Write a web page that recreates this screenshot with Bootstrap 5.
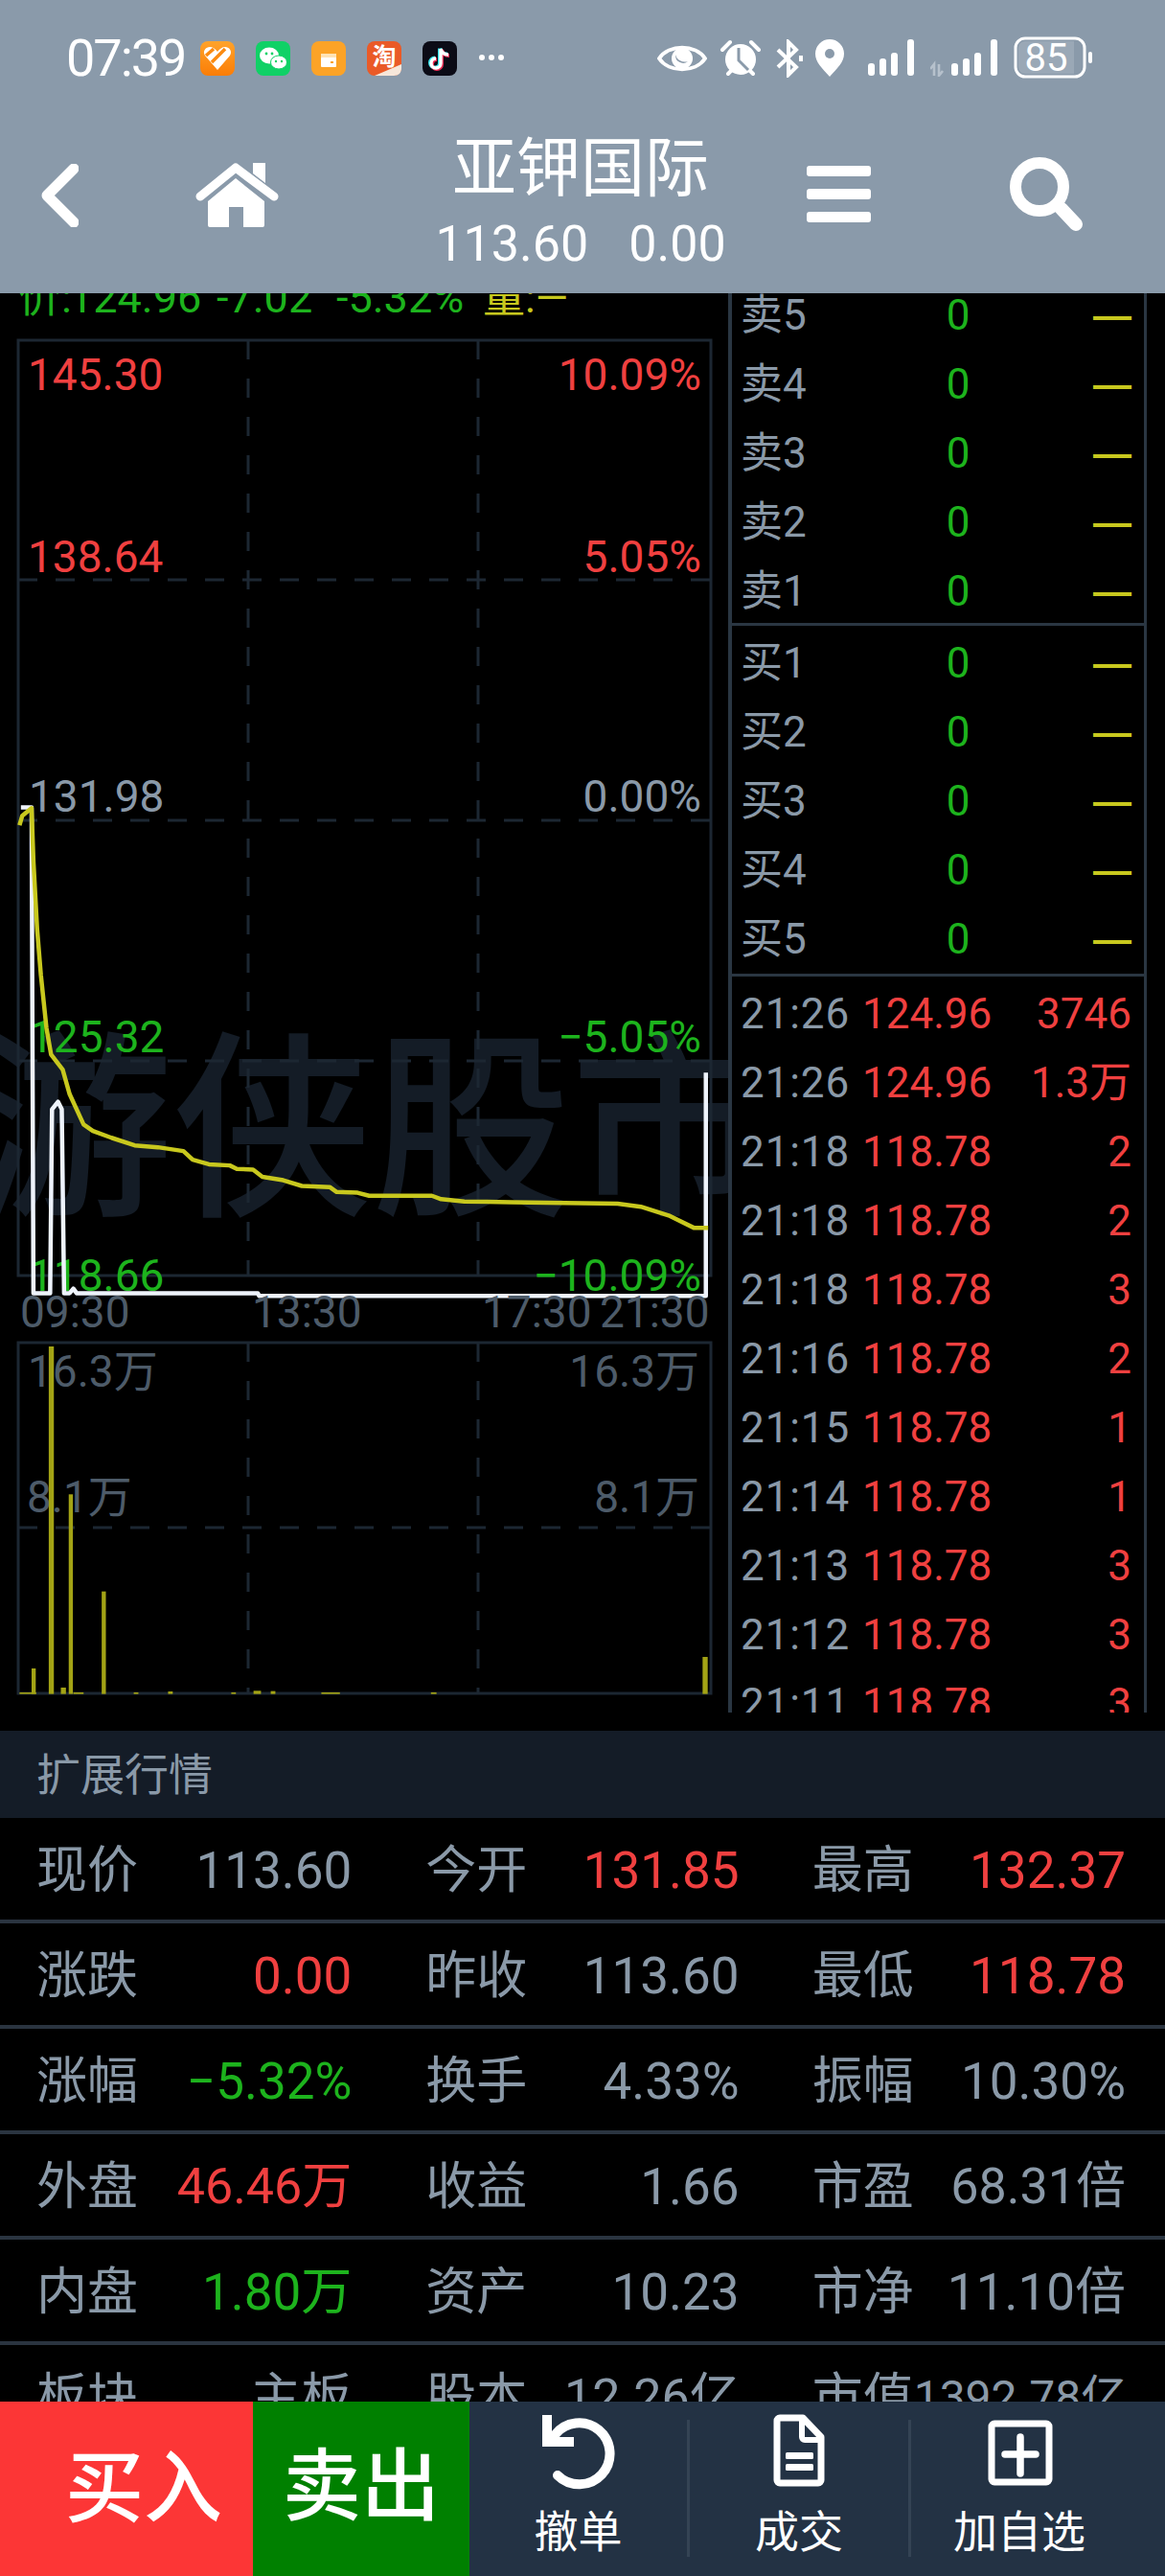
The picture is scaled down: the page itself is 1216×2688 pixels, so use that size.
<!DOCTYPE html>
<html lang="zh-CN">
<head>
<meta charset="utf-8">
<title>亚钾国际</title>
<link href="https://cdn.jsdelivr.net/npm/bootstrap@5.3.0/dist/css/bootstrap.min.css" rel="stylesheet">
<style>
html,body{background:#000;margin:0}
body{width:1216px;height:2688px;overflow:hidden;font-family:Roboto,"Noto Sans CJK SC",sans-serif;color:#8a99a8;line-height:1}
svg{display:block;flex:none}
.hdr{height:306px;background:#8a9aaa;color:#fff;position:relative;z-index:2}
.stat{height:122px;padding-top:40px}
.clock{font-size:54px;margin-left:69px;width:140px;line-height:42px;letter-spacing:-2px}
.nav-row{height:184px;padding-left:42px;padding-bottom:10px}
.ttl-box{width:340px;margin:4px 66px 0 145px;text-align:center}
.ttl-main{font-size:67px;line-height:66px;margin-bottom:22px}
.ttl-sub{font-size:52px;line-height:48px}
.ttl-sub span+span{margin-left:42px}
.app-ico{margin-top:3px;margin-left:22px}
.app-ico.first{margin-left:0}
.stat-eye{margin-left:158px;margin-top:-1px}
.stat-al{margin-left:13px;margin-top:1px}
.stat-bt{margin-left:14px;margin-top:1px}
.stat-pin{margin-left:11px;margin-top:1px}
.stat-s1{margin-left:24px;margin-top:0}
.stat-s2{margin-left:15px;margin-top:0}
.stat-bat{margin-left:17px;margin-top:-2px}
.ico-back{margin-top:-10px}
.ico-home{margin-left:121px;margin-top:-13px}
.ham-wrap{gap:13px;width:67px;margin-top:-14px}
.ham-bar{display:block;height:11px;border-radius:3px;background:#fff}
.ico-srch{margin-left:145px;margin-top:-12px}
.mainbox{height:1481px;overflow:hidden}
.book{width:437px;border-left:4px solid #2a3642;border-right:3px solid #2a3642;margin-top:-13px;height:1494px;overflow:hidden;font-size:44px}
.book-sec{border-bottom:3px solid #2a3642}
.sec-sell{height:360px}
.sec-buy{height:366px;padding-top:3px}
.sec-tr{padding-top:3px}
.ob-row{height:72px}
.ob-lab{width:191px;padding-left:9px}
.ob-zero{width:90px;text-align:center;color:#1db31d}
.ob-dash{flex:1;text-align:right;padding-right:13px;color:#c8c81e;font-family:"Liberation Sans",sans-serif;font-weight:700;font-size:40px;line-height:42px}
.tr-time{width:136px;padding-left:9px;letter-spacing:.9px}
.tr-pr{width:132px;color:#f04040}
.tr-vol{flex:1;text-align:right;padding-right:13px;color:#f04040}
.gap-strip{height:19px}
.ext-bar{height:91px;background:#141c27;padding-left:38px;font-size:46px}
.tbl{height:609px;overflow:hidden;font-size:53px}
.tb-row{height:110px;border-bottom:4px solid #2a3440;padding-top:4px;margin:0}
.tb-cell{padding:0 41px 0 38px;white-space:nowrap}
.tb-cell:nth-child(1){padding-right:38px}
.tb-cell:nth-child(2){padding-left:39px;padding-right:39px}
.tb-cell:nth-child(3){padding-left:37px}
.up{color:#f04040}
.dn{color:#1db31d}
.fs-a{font-size:52px}
.fs-b{font-size:48px}
.foot{height:182px;color:#fff;background:#233244}
.buy-btn,.sell-btn{font-size:82px;font-weight:500;border:0;border-radius:0;color:#fff;height:100%;padding:0}
.buy-btn{width:264px;background:#fc3636;padding-left:36px}
.sell-btn{width:226px;background:#008000;padding-bottom:4px}
.ft-cell{font-size:46px;height:100%;padding-top:9px}
.ft-c1{width:227px}.ft-c2{width:228px}.ft-c3{width:226px}
.ft-lab{margin-top:20px;line-height:44px}
.ft-sep{width:3px;height:143px;margin-top:19px;background:#344354}
</style>
</head>
<body>
<header class="hdr">
  <div class="stat d-flex">
    <div class="clock">07:39</div>
    <svg width="36" height="36" viewBox="0 0 36 36" class="app-ico first"><defs><linearGradient id="og" x1="0" y1="0" x2="0" y2="1"><stop offset="0" stop-color="#ffa32b"/><stop offset="1" stop-color="#fb7d06"/></linearGradient></defs><rect width="36" height="36" rx="8" fill="url(#og)"/><path d="M18 30 5 15c-3-5 1-9 5-9 3 0 6 2 8 5 2-3 5-5 8-5 4 0 8 4 5 9Z" fill="#fff"/><path d="M6 15 14 8M12 22 26 8" stroke="#fb8a10" stroke-width="3.5"/></svg>
    <svg width="36" height="36" viewBox="0 0 36 36" class="app-ico"><rect width="36" height="36" rx="8" fill="#10d166"/><ellipse cx="14" cy="15" rx="10" ry="8.5" fill="#fff"/><ellipse cx="24" cy="22" rx="8.5" ry="7" fill="#fff" stroke="#10d166" stroke-width="1"/><circle cx="11" cy="13" r="1.4" fill="#10d166"/><circle cx="17" cy="13" r="1.4" fill="#10d166"/><circle cx="21" cy="21" r="1.2" fill="#10d166"/><circle cx="27" cy="21" r="1.2" fill="#10d166"/></svg>
    <svg width="36" height="36" viewBox="0 0 36 36" class="app-ico"><rect width="36" height="36" rx="8" fill="#fca327"/><rect x="10" y="13" width="16" height="5" fill="#ffe3b5"/><rect x="10" y="17" width="16" height="10" rx="1" fill="#fff"/><rect x="20" y="21" width="3" height="2" fill="#fca327"/></svg>
    <svg width="36" height="36" viewBox="0 0 36 36" class="app-ico"><rect width="36" height="36" rx="8" fill="#ea5a27"/><text x="18" y="25" font-size="25" font-weight="700" fill="#fff" text-anchor="middle" font-family="Noto Sans CJK SC">淘</text><path d="M8 36 36 24V28C36 33 33 36 28 36Z" fill="#f6e7da"/></svg>
    <svg width="36" height="36" viewBox="0 0 36 36" class="app-ico"><rect width="36" height="36" rx="8" fill="#0b0b16"/><path d="M19 8V23A5 5 0 1 1 14 18M19 8C20 12 23 14 27 14" fill="none" stroke="#35e0e8" stroke-width="4" transform="translate(-1 -.5)"/><path d="M19 8V23A5 5 0 1 1 14 18M19 8C20 12 23 14 27 14" fill="none" stroke="#f02d55" stroke-width="4" transform="translate(1 1)"/><path d="M19 8V23A5 5 0 1 1 14 18M19 8C20 12 23 14 27 14" fill="none" stroke="#fff" stroke-width="3.4"/></svg>
    <svg width="29" height="36" viewBox="0 0 29 36" class="app-ico"><circle cx="4" cy="17" r="3" fill="#fff"/><circle cx="14" cy="17" r="3" fill="#fff"/><circle cx="24" cy="17" r="3" fill="#fff"/></svg>
    <svg width="52" height="44" viewBox="0 0 52 44" class="stat-eye"><path d="M2 22C12 7 40 7 50 22 40 37 12 37 2 22Z" fill="none" stroke="#fff" stroke-width="4"/><circle cx="26" cy="22" r="11" fill="#fff"/><path d="M19 18a8 8 0 0 0 13 7 10 10 0 0 1-13-7Z" fill="#8a9aaa"/></svg>
    <svg width="44" height="40" viewBox="0 0 44 40" class="stat-al"><circle cx="22" cy="21" r="16" fill="#fff"/><path d="M3 11 11 3M41 11 33 3M9 36 13 32M35 36 31 32" stroke="#fff" stroke-width="4" stroke-linecap="round"/><path d="M20 9V22L30 32" fill="none" stroke="#8a9aaa" stroke-width="3"/></svg>
    <svg width="30" height="40" viewBox="0 0 30 40" class="stat-bt"><path d="M3 11 22 29 14 37V3L22 11 3 29" fill="none" stroke="#fff" stroke-width="4"/><path d="M27 17V23" stroke="#fff" stroke-width="4"/></svg>
    <svg width="32" height="40" viewBox="0 0 32 40" class="stat-pin"><path d="M16 39C8 30 1 24 1 15a15 15 0 0 1 30 0C31 24 24 30 16 39Z" fill="#fff"/><circle cx="16" cy="15" r="5" fill="#8a9aaa"/></svg>
    <svg width="50" height="40" viewBox="0 0 50 40" class="stat-s1"><g fill="#fff"><rect x="0" y="26" width="7" height="13" rx="3"/><rect x="12" y="21" width="7" height="18" rx="3"/><rect x="24" y="15" width="7" height="24" rx="3"/><rect x="41" y="1" width="7" height="38" rx="3"/></g></svg>
    <svg width="70" height="40" viewBox="0 0 70 40" class="stat-s2"><path d="M4 39V27L0 32M9 27V39L13 34" fill="none" stroke="#b6c1cc" stroke-width="2.6"/><g fill="#fff"><rect x="22" y="26" width="7" height="13" rx="3"/><rect x="34" y="21" width="7" height="18" rx="3"/><rect x="46" y="15" width="7" height="24" rx="3"/><rect x="63" y="1" width="7" height="38" rx="3"/></g></svg>
    <svg width="84" height="44" viewBox="0 0 84 44" class="stat-bat"><rect x="2" y="2" width="72" height="40" rx="10" fill="none" stroke="#fff" stroke-width="3"/><path d="M5 12a7 7 0 0 1 7-7H63V39H12a7 7 0 0 1-7-7Z" fill="#fff" fill-opacity=".14"/><rect x="78" y="16" width="4" height="12" rx="2" fill="#fff"/><text x="34" y="36" font-size="40" fill="#fff" text-anchor="middle" font-family="Roboto">85</text></svg>
  </div>
  <nav class="nav-row d-flex align-items-center">
    <svg width="40" height="66" viewBox="0 0 40 66" class="ico-back" aria-label="back"><path d="M35 5 7 33 35 61" fill="none" stroke="#fff" stroke-width="11" stroke-linecap="round" stroke-linejoin="round"/></svg>
    <svg width="88" height="68" viewBox="0 0 88 68" class="ico-home" aria-label="home"><path d="M6 36 43 6 83 36" fill="none" stroke="#fff" stroke-width="9" stroke-linecap="round" stroke-linejoin="round"/><path d="M61 1H74V22L61 12Z" fill="#fff"/><path d="M43 17 73 41V66a2 2 0 0 1-2 2H51V47H36V68H16a2 2 0 0 1-2-2V41Z" fill="#fff"/></svg>
    <div class="ttl-box">
      <div class="ttl-main">亚钾国际</div>
      <div class="ttl-sub"><span>113.60</span><span>0.00</span></div>
    </div>
    <div class="d-flex flex-column ham-wrap"><i class="ham-bar"></i><i class="ham-bar"></i><i class="ham-bar"></i></div>
    <svg width="76" height="78" viewBox="0 0 76 78" class="ico-srch" aria-label="search"><circle cx="31" cy="31" r="25" fill="none" stroke="#fff" stroke-width="12"/><path d="M54 54 69 70" stroke="#fff" stroke-width="14" stroke-linecap="round"/></svg>
  </nav>
</header>
<main class="mainbox d-flex">
  <svg width="760" height="1481" viewBox="0 306 760 1481" font-family="Roboto,'Noto Sans CJK SC',sans-serif">
    <text x="-28" y="1252" font-size="208" font-weight="500" fill="#141c26" font-family="Noto Sans CJK SC">游侠股市</text>
    <text y="326" font-size="45" fill="#1db31d"><tspan x="19">价:</tspan><tspan x="72">124.96</tspan><tspan x="226">-7.02</tspan><tspan x="351">-5.32%</tspan></text>
    <text x="504" y="326" font-size="44" fill="#c8c81e">量:—</text>
    <g fill="none" stroke="#1c2732" stroke-width="3">
      <path d="M19 355H742V1331H19Z"/>
      <path d="M19 605H742M19 856H742M19 1107H742" stroke-dasharray="20 19"/>
      <path d="M259 355V1331M499 355V1331" stroke-dasharray="20 20"/>
    </g>
    <g font-size="46">
      <g fill="#f04040"><text x="29" y="407">145.30</text><text x="29" y="597">138.64</text><text x="732" y="407" text-anchor="end">10.09%</text><text x="732" y="597" text-anchor="end">5.05%</text></g>
      <g fill="#8a99a8"><text x="30" y="847">131.98</text><text x="732" y="847" text-anchor="end">0.00%</text></g>
      <g fill="#1db31d"><text x="30" y="1098">125.32</text><text x="30" y="1347">118.66</text><text x="732" y="1098" text-anchor="end">−5.05%</text><text x="732" y="1347" text-anchor="end">−10.09%</text></g>
    </g>
    <g transform="translate(0 780) scale(.4847 .3954)" fill="none" stroke-linejoin="round">
      <polyline vector-effect="non-scaling-stroke" stroke="#eef3fb" stroke-width="4.5" points="45,158 68,158 72,1440 108,1440 112,955 125,935 133,955 138,1440 150,1440 158,1428 165,1440 555,1440 558,1447 1520,1447 1520,858"/>
      <polyline vector-effect="non-scaling-stroke" stroke="#c8c81e" stroke-width="4.5" points="42,205 48,180 68,160 72,300 80,480 88,600 100,740 110,810 135,850 150,915 180,995 200,1012 240,1030 290,1050 340,1055 395,1065 415,1088 450,1100 495,1103 510,1112 545,1114 565,1133 610,1142 650,1157 710,1160 725,1173 770,1175 795,1183 930,1183 950,1192 1000,1198 1100,1200 1330,1204 1380,1212 1440,1235 1495,1268 1525,1268"/>
    </g>
    <g font-size="46" fill="#4d5b69"><text x="21" y="1385">09:30</text><text x="263" y="1385">13:30</text><text x="503" y="1385">17:30</text><text x="626" y="1385">21:30</text></g>
    <g fill="none" stroke="#1c2732" stroke-width="3">
      <path d="M19 1401H742V1767H19Z"/>
      <path d="M19 1594H742" stroke-dasharray="20 19"/>
      <path d="M259 1401V1767M499 1401V1767" stroke-dasharray="20 20"/>
    </g>
    <g font-size="46" fill="#4d5b69"><text x="29" y="1447">16.3万</text><text x="730" y="1447" text-anchor="end">16.3万</text><text x="28" y="1578">8.1万</text><text x="730" y="1578" text-anchor="end">8.1万</text></g>
    <g transform="translate(0 1380) scale(.4847 .3333)" fill="#a3a315">
      <rect x="68" y="1083" width="9" height="80"/><rect x="105" y="75" width="11" height="1088"/><rect x="148" y="538" width="9" height="625"/><rect x="131" y="1143" width="11" height="20"/><rect x="219" y="842" width="9" height="321"/><rect x="1513" y="1047" width="11" height="116"/>
      <rect x="42" y="1158" width="36" height="5"/><rect x="158" y="1158" width="22" height="5"/><rect x="288" y="1158" width="10" height="5"/><rect x="362" y="1155" width="10" height="8"/><rect x="498" y="1158" width="10" height="5"/><rect x="546" y="1153" width="16" height="10"/><rect x="583" y="1154" width="10" height="9"/><rect x="692" y="1158" width="40" height="5"/><rect x="928" y="1158" width="12" height="5"/>
    </g>
  </svg>
  <aside class="book">
    <div class="book-sec sec-sell">
      <div class="ob-row d-flex align-items-center"><span class="ob-lab">卖5</span><span class="ob-zero">0</span><span class="ob-dash">—</span></div>
      <div class="ob-row d-flex align-items-center"><span class="ob-lab">卖4</span><span class="ob-zero">0</span><span class="ob-dash">—</span></div>
      <div class="ob-row d-flex align-items-center"><span class="ob-lab">卖3</span><span class="ob-zero">0</span><span class="ob-dash">—</span></div>
      <div class="ob-row d-flex align-items-center"><span class="ob-lab">卖2</span><span class="ob-zero">0</span><span class="ob-dash">—</span></div>
      <div class="ob-row d-flex align-items-center"><span class="ob-lab">卖1</span><span class="ob-zero">0</span><span class="ob-dash">—</span></div>
    </div>
    <div class="book-sec sec-buy">
      <div class="ob-row d-flex align-items-center"><span class="ob-lab">买1</span><span class="ob-zero">0</span><span class="ob-dash">—</span></div>
      <div class="ob-row d-flex align-items-center"><span class="ob-lab">买2</span><span class="ob-zero">0</span><span class="ob-dash">—</span></div>
      <div class="ob-row d-flex align-items-center"><span class="ob-lab">买3</span><span class="ob-zero">0</span><span class="ob-dash">—</span></div>
      <div class="ob-row d-flex align-items-center"><span class="ob-lab">买4</span><span class="ob-zero">0</span><span class="ob-dash">—</span></div>
      <div class="ob-row d-flex align-items-center"><span class="ob-lab">买5</span><span class="ob-zero">0</span><span class="ob-dash">—</span></div>
    </div>
    <div class="sec-tr">
      <div class="ob-row d-flex align-items-center"><span class="tr-time">21:26</span><span class="tr-pr">124.96</span><span class="tr-vol">3746</span></div>
      <div class="ob-row d-flex align-items-center"><span class="tr-time">21:26</span><span class="tr-pr">124.96</span><span class="tr-vol">1.3万</span></div>
      <div class="ob-row d-flex align-items-center"><span class="tr-time">21:18</span><span class="tr-pr">118.78</span><span class="tr-vol">2</span></div>
      <div class="ob-row d-flex align-items-center"><span class="tr-time">21:18</span><span class="tr-pr">118.78</span><span class="tr-vol">2</span></div>
      <div class="ob-row d-flex align-items-center"><span class="tr-time">21:18</span><span class="tr-pr">118.78</span><span class="tr-vol">3</span></div>
      <div class="ob-row d-flex align-items-center"><span class="tr-time">21:16</span><span class="tr-pr">118.78</span><span class="tr-vol">2</span></div>
      <div class="ob-row d-flex align-items-center"><span class="tr-time">21:15</span><span class="tr-pr">118.78</span><span class="tr-vol">1</span></div>
      <div class="ob-row d-flex align-items-center"><span class="tr-time">21:14</span><span class="tr-pr">118.78</span><span class="tr-vol">1</span></div>
      <div class="ob-row d-flex align-items-center"><span class="tr-time">21:13</span><span class="tr-pr">118.78</span><span class="tr-vol">3</span></div>
      <div class="ob-row d-flex align-items-center"><span class="tr-time">21:12</span><span class="tr-pr">118.78</span><span class="tr-vol">3</span></div>
      <div class="ob-row d-flex align-items-center"><span class="tr-time">21:11</span><span class="tr-pr">118.78</span><span class="tr-vol">3</span></div>
    </div>
  </aside>
</main>
<div class="gap-strip"></div>
<div class="ext-bar d-flex align-items-center">扩展行情</div>
<section class="tbl">
  <div class="row g-0 tb-row align-items-center">
    <div class="col-4 tb-cell d-flex justify-content-between"><span>现价</span><span>113.60</span></div>
    <div class="col-4 tb-cell d-flex justify-content-between"><span>今开</span><span class="up">131.85</span></div>
    <div class="col-4 tb-cell d-flex justify-content-between"><span>最高</span><span class="up">132.37</span></div>
  </div>
  <div class="row g-0 tb-row align-items-center">
    <div class="col-4 tb-cell d-flex justify-content-between"><span>涨跌</span><span class="up">0.00</span></div>
    <div class="col-4 tb-cell d-flex justify-content-between"><span>昨收</span><span>113.60</span></div>
    <div class="col-4 tb-cell d-flex justify-content-between"><span>最低</span><span class="up">118.78</span></div>
  </div>
  <div class="row g-0 tb-row align-items-center">
    <div class="col-4 tb-cell d-flex justify-content-between"><span>涨幅</span><span class="dn">−5.32%</span></div>
    <div class="col-4 tb-cell d-flex justify-content-between"><span>换手</span><span>4.33%</span></div>
    <div class="col-4 tb-cell d-flex justify-content-between"><span>振幅</span><span>10.30%</span></div>
  </div>
  <div class="row g-0 tb-row align-items-center">
    <div class="col-4 tb-cell d-flex justify-content-between align-items-center"><span>外盘</span><span class="up fs-a">46.46万</span></div>
    <div class="col-4 tb-cell d-flex justify-content-between"><span>收益</span><span>1.66</span></div>
    <div class="col-4 tb-cell d-flex justify-content-between align-items-center"><span>市盈</span><span class="fs-a">68.31倍</span></div>
  </div>
  <div class="row g-0 tb-row align-items-center">
    <div class="col-4 tb-cell d-flex justify-content-between"><span>内盘</span><span class="dn">1.80万</span></div>
    <div class="col-4 tb-cell d-flex justify-content-between"><span>资产</span><span>10.23</span></div>
    <div class="col-4 tb-cell d-flex justify-content-between"><span>市净</span><span>11.10倍</span></div>
  </div>
  <div class="row g-0 tb-row align-items-center">
    <div class="col-4 tb-cell d-flex justify-content-between"><span>板块</span><span>主板</span></div>
    <div class="col-4 tb-cell d-flex justify-content-between align-items-center"><span>股本</span><span class="fs-a">12.26亿</span></div>
    <div class="col-4 tb-cell d-flex justify-content-between align-items-center"><span>市值</span><span class="fs-b">1392.78亿</span></div>
  </div>
</section>
<footer class="foot d-flex">
  <button class="btn buy-btn" type="button">买入</button>
  <button class="btn sell-btn" type="button">卖出</button>
  <div class="ft-cell ft-c1 d-flex flex-column align-items-center">
    <svg width="85" height="85" viewBox="0 0 85 85"><path d="M18 26A32 32 0 1 1 21 68" fill="none" stroke="#fff" stroke-width="10" stroke-linecap="round"/><path d="M5 5H15V28H38V38H5Z" fill="#fff"/></svg>
    <span class="ft-lab">撤单</span>
  </div>
  <div class="ft-sep"></div>
  <div class="ft-cell ft-c2 d-flex flex-column align-items-center">
    <svg width="85" height="85" viewBox="0 0 85 85"><g transform="translate(4)"><path d="M18 8H42L61 28V73a3 3 0 0 1-3 3H18a3 3 0 0 1-3-3V11a3 3 0 0 1 3-3Z" fill="none" stroke="#fff" stroke-width="7" stroke-linejoin="round"/><path d="M41 8V28a3 3 0 0 0 3 3H61" fill="none" stroke="#fff" stroke-width="6"/><rect x="24" y="44" width="29" height="7" rx="1.5" fill="#fff"/><rect x="24" y="56" width="29" height="7" rx="1.5" fill="#fff"/></g></svg>
    <span class="ft-lab">成交</span>
  </div>
  <div class="ft-sep"></div>
  <div class="ft-cell ft-c3 d-flex flex-column align-items-center">
    <svg width="85" height="85" viewBox="0 0 85 85"><rect x="13" y="14" width="60" height="61" rx="3" fill="none" stroke="#fff" stroke-width="7"/><path d="M43 28V66M27 46H59" stroke="#fff" stroke-width="7.5" stroke-linecap="round"/></svg>
    <span class="ft-lab">加自选</span>
  </div>
</footer>
<script src="https://cdn.jsdelivr.net/npm/bootstrap@5.3.0/dist/js/bootstrap.bundle.min.js"></script>
</body>
</html>
